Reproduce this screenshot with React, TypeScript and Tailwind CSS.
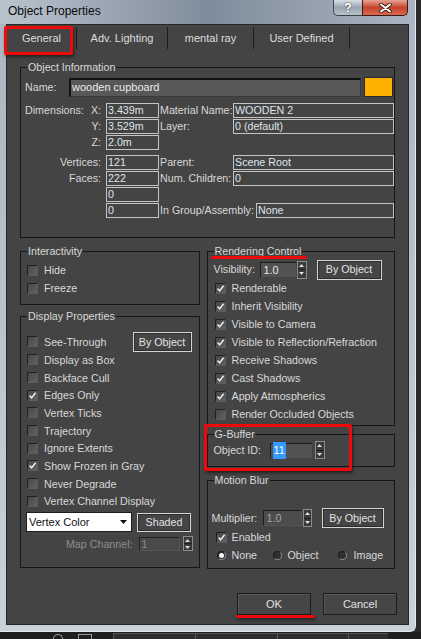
import React from 'react';

type Kids = { children?: React.ReactNode; className?: string };

function Group({ title, className = '', children }: Kids & { title: string }) {
  return (
    <fieldset className={`min-w-0 border border-[#161616] ${className}`}>
      <legend className="ml-[6px] px-[1px] leading-[14px] text-[#d8d8d8]">{title}</legend>
      {children}
    </fieldset>
  );
}

function CheckBox({ checked = false }: { checked?: boolean }) {
  return (
    <span className="relative block h-[11px] w-[11px] shrink-0 border border-t-[#202020] border-l-[#202020] border-b-[#5c5c5c] border-r-[#5c5c5c] bg-gradient-to-br from-[#474747] to-[#626262]">
      {checked && (
        <svg viewBox="0 0 9 9" className="absolute left-0 top-0 h-[9px] w-[9px]">
          <path d="M1.6 4.5 L3.6 6.9 L7.6 1.8" fill="none" stroke="#f0f0f0" strokeWidth="1.5" />
        </svg>
      )}
    </span>
  );
}

function CheckRow({ label, checked, className = '' }: { label: string; checked?: boolean; className?: string }) {
  return (
    <div className={`flex items-center whitespace-nowrap ${className}`}>
      <CheckBox checked={checked} />
      <span className="ml-[6px]">{label}</span>
    </div>
  );
}

function Radio({ on = false }: { on?: boolean }) {
  return (
    <span className="relative block h-[9px] w-[9px] shrink-0 rounded-full border border-t-[#1c1c1c] border-l-[#1c1c1c] border-b-[#8a8a8a] border-r-[#8a8a8a] bg-[#2f2f2f]">
      {on && <span className="absolute left-[1px] top-[1px] h-[5px] w-[5px] rounded-full bg-[#f4f4f4]" />}
    </span>
  );
}

function Arrows({ className = '' }: { className?: string }) {
  return (
    <span className={`flex shrink-0 flex-col border border-[#8c8c8c] bg-[#3a3a3a] ${className}`}>
      <span className="flex flex-1 items-center justify-center border-b border-[#222]">
        <svg width="5" height="3" viewBox="0 0 5 3"><path d="M0 3L2.5 0L5 3Z" fill="#dedede" /></svg>
      </span>
      <span className="flex flex-1 items-center justify-center">
        <svg width="5" height="3" viewBox="0 0 5 3"><path d="M0 0L5 0L2.5 3Z" fill="#dedede" /></svg>
      </span>
    </span>
  );
}

function Box({ className = '', children }: Kids) {
  return (
    <div className={`flex h-[15px] items-center overflow-hidden whitespace-nowrap border border-[#c4c4c4] pl-[1px] text-[#dfe5ee] ${className}`}>
      {children}
    </div>
  );
}

function Btn({ className = '', children }: Kids) {
  return (
    <div className={`flex items-center justify-center border border-[#d4d4d4] bg-[#454545] text-[#e2e2e2] shadow-[inset_0_0_0_1px_#2c2c2c] ${className}`}>
      {children}
    </div>
  );
}

interface InfoRowProps {
  lead?: string;
  label?: string;
  value: string;
  rLabel?: string;
  rValue?: string;
  wide?: boolean;
}

function InfoRow({ lead, label, value, rLabel, rValue, wide }: InfoRowProps) {
  return (
    <div className="flex h-[15px] items-center whitespace-nowrap">
      <div className="flex w-[79px] justify-between pr-[3px]">
        <span>{lead}</span>
        <span>{label}</span>
      </div>
      <Box className="ml-[2px] w-[53px]">{value}</Box>
      {rLabel !== undefined && (
        <>
          <span className={wide ? 'w-[97px] pl-[1px]' : 'w-[74px] pl-[1px]'}>{rLabel}</span>
          <Box className={wide ? 'w-[138px]' : 'w-[161px]'}>{rValue}</Box>
        </>
      )}
    </div>
  );
}

const dims: InfoRowProps[] = [
  { lead: 'Dimensions:', label: 'X:', value: '3.439m', rLabel: 'Material Name:', rValue: 'WOODEN 2' },
  { label: 'Y:', value: '3.529m', rLabel: 'Layer:', rValue: '0 (default)' },
  { label: 'Z:', value: '2.0m' },
];

const counts: InfoRowProps[] = [
  { label: 'Vertices:', value: '121', rLabel: 'Parent:', rValue: 'Scene Root' },
  { label: 'Faces:', value: '222', rLabel: 'Num. Children:', rValue: '0' },
  { value: '0' },
  { value: '0', rLabel: 'In Group/Assembly:', rValue: 'None', wide: true },
];

const displayRows = [
  { label: 'Display as Box' },
  { label: 'Backface Cull' },
  { label: 'Edges Only', checked: true },
  { label: 'Vertex Ticks' },
  { label: 'Trajectory' },
  { label: 'Ignore Extents' },
  { label: 'Show Frozen in Gray', checked: true },
  { label: 'Never Degrade' },
  { label: 'Vertex Channel Display' },
];

const renderRows = [
  'Renderable',
  'Inherit Visibility',
  'Visible to Camera',
  'Visible to Reflection/Refraction',
  'Receive Shadows',
  'Cast Shadows',
  'Apply Atmospherics',
];

export default function App() {
  return (
    <div className="relative h-[639px] w-[421px] overflow-hidden bg-[#2a2a2a] font-['Liberation_Sans',Arial,sans-serif] text-[10.7px] text-[#d8d8d8]">
      {/* window frame */}
      <div className="flex h-[632px] w-[416px] flex-col rounded-br-[6px] border-b border-r border-[#e4eaf0] bg-gradient-to-b from-[#a9b5c2] to-[#c9d2db]">
        {/* title bar */}
        <div className="flex h-[24px] shrink-0 items-start bg-gradient-to-r from-[#bac4cf] via-[#7f8c9b] to-[#aab5c1]">
          <span className="pl-[8px] pt-[4px] text-[12px] leading-[14px] text-[#0b0b0b]">Object Properties</span>
          <div className="ml-auto mr-[7px] flex">
            <div className="flex h-[16px] w-[29px] items-center justify-center rounded-bl-[5px] border border-t-0 border-r-0 border-[#3c434c] bg-gradient-to-b from-[#d8dee5] via-[#9aa5b1] to-[#b8c2cc] text-[12px] font-bold leading-none text-white [text-shadow:0_0_2px_#222]">
              ?
            </div>
            <div className="flex h-[16px] w-[46px] items-center justify-center rounded-br-[5px] border border-t-0 border-[#3a1814] bg-gradient-to-b from-[#e7a293] via-[#c4432e] to-[#d96a4e]">
              <svg width="13" height="10" viewBox="0 0 13 10">
                <path d="M2 1.5 L11 8.5 M11 1.5 L2 8.5" stroke="#3a1a14" strokeWidth="3.6" strokeLinecap="round" />
                <path d="M2 1.5 L11 8.5 M11 1.5 L2 8.5" stroke="#ffffff" strokeWidth="2" strokeLinecap="round" />
              </svg>
            </div>
          </div>
        </div>

        {/* dialog body */}
        <div className="mx-[6px] mb-[6px] flex flex-1 flex-col border border-[#262626] bg-[#444444]">
          {/* tabs */}
          <div className="flex h-[26px] shrink-0 py-[2px] text-[11px] text-[#dedede]">
            <div className="flex w-[70px] items-center justify-center border-r border-[#1c1c1c]">General</div>
            <div className="flex w-[91px] items-center justify-center border-r border-[#1c1c1c]">Adv. Lighting</div>
            <div className="flex w-[86px] items-center justify-center border-r border-[#1c1c1c]">mental ray</div>
            <div className="flex w-[96px] items-center justify-center border-r border-[#1c1c1c]">User Defined</div>
          </div>

          <div className="px-[13px]">
            {/* Object Information */}
            <Group title="Object Information" className="mt-[9px]">
              <div className="pb-[19px] pl-[4px] pt-[3px]">
                <div className="flex h-[20px] items-center">
                  <span className="w-[44px]">Name:</span>
                  <div className="flex h-[19px] w-[292px] items-center border-b border-l-2 border-r border-t-2 border-b-[#3a3a3a] border-l-[#121212] border-r-[#3a3a3a] border-t-[#121212] bg-[#585858] pl-[1px] text-[11px] text-[#ececec]">
                    wooden cupboard
                  </div>
                  <div className="ml-[3px] h-[20px] w-[29px] border border-[#2a2a2a] bg-[#ffb000]" />
                </div>
                <div className="mt-[6px] flex flex-col gap-[1px]">
                  {dims.map((r, i) => (
                    <InfoRow key={i} {...r} />
                  ))}
                </div>
                <div className="mt-[5px] flex flex-col gap-[1px]">
                  {counts.map((r, i) => (
                    <InfoRow key={i} {...r} />
                  ))}
                </div>
              </div>
            </Group>

            <div className="mt-[6px] flex items-start">
              {/* left column */}
              <div className="flex w-[180px] flex-col">
                <Group title="Interactivity">
                  <div className="pb-[7px] pl-[6px] pt-[3px]">
                    <CheckRow label="Hide" className="h-[18px]" />
                    <CheckRow label="Freeze" className="h-[18px]" />
                  </div>
                </Group>

                <Group title="Display Properties" className="mt-[4px]">
                  <div className="pb-[16px] pt-[10px]">
                    <div className="flex h-[18px] items-center pl-[6px] pr-[7px]">
                      <CheckRow label="See-Through" />
                      <Btn className="ml-auto h-[20px] w-[59px]">By Object</Btn>
                    </div>
                    {displayRows.map((r) => (
                      <CheckRow key={r.label} label={r.label} checked={r.checked} className="h-[17.7px] pl-[6px]" />
                    ))}
                    <div className="mt-[2px] flex h-[20px] items-center pl-[5px]">
                      <div className="flex h-[20px] w-[106px] items-center border border-[#1e1e1e] bg-white pl-[2px] text-[11px] text-[#111]">
                        <span>Vertex Color</span>
                        <svg className="ml-auto mr-[4px]" width="7" height="4" viewBox="0 0 7 4"><path d="M0 0H7L3.5 4Z" fill="#111" /></svg>
                      </div>
                      <Btn className="ml-[5px] h-[19px] w-[54px]">Shaded</Btn>
                    </div>
                    <div className="mt-[4px] flex h-[15px] items-center justify-end pr-[6px] text-[#8e8e8e]">
                      <span className="mr-[6px]">Map Channel:</span>
                      <div className="flex h-[14px] w-[41px] items-center border-b border-l border-r border-t border-b-[#555] border-l-[#222] border-r-[#555] border-t-[#222] bg-[#4a4a4a] pl-[2px]">1</div>
                      <Arrows className="ml-[3px] h-[15px] w-[10px]" />
                    </div>
                  </div>
                </Group>
              </div>

              {/* right column */}
              <div className="ml-[7px] flex w-[189px] flex-col">
                <Group title="Rendering Control">
                  <div className="pb-[2px] pt-[2px]">
                    <div className="flex h-[19px] items-center pl-[6px]">
                      <span className="w-[46px]">Visibility:</span>
                      <div className="flex h-[15px] w-[36px] items-center border-l border-t border-[#1c1c1c] bg-[#535353] pl-[3px] text-[#e6e6e6]">1.0</div>
                      <Arrows className="ml-[1px] h-[18px] w-[10px]" />
                      <Btn className="ml-[10px] h-[20px] w-[65px]">By Object</Btn>
                    </div>
                    {renderRows.map((l) => (
                      <CheckRow key={l} label={l} checked className="h-[18px] pl-[7px]" />
                    ))}
                    <CheckRow label="Render Occluded Objects" className="h-[18px] pl-[7px]" />
                  </div>
                </Group>

                <Group title="G-Buffer" className="mt-[1px]">
                  <div className="flex h-[18px] items-center pl-[6px]">
                    <span className="w-[56px]">Object ID:</span>
                    <div className="flex h-[15px] w-[42px] items-center border-l border-t border-[#1c1c1c] bg-[#535353] pl-[2px]">
                      <span className="bg-[#3399ff] px-[1px] text-white">11</span>
                    </div>
                    <Arrows className="ml-[3px] h-[18px] w-[10px]" />
                  </div>
                  <div className="h-[7px]" />
                </Group>

                <Group title="Motion Blur" className="mt-[6px]">
                  <div className="pb-[3px] pt-[21px]">
                    <div className="flex h-[20px] items-center pl-[4px]">
                      <span className="w-[51px]">Multiplier:</span>
                      <div className="flex h-[16px] w-[39px] items-center border-b border-l border-r border-t border-b-[#555] border-l-[#1c1c1c] border-r-[#555] border-t-[#1c1c1c] bg-[#4c4c4c] pl-[3px] text-[#a6a6a6]">1.0</div>
                      <Arrows className="ml-[1px] h-[18px] w-[9px]" />
                      <Btn className="ml-[10px] h-[20px] w-[62px]">By Object</Btn>
                    </div>
                    <div className="flex h-[18px] items-center pl-[8px]">
                      <CheckBox checked />
                      <span className="ml-[5px]">Enabled</span>
                    </div>
                    <div className="flex h-[19px] items-center pl-[9px]">
                      <div className="flex w-[56px] items-center">
                        <Radio on />
                        <span className="ml-[6px]">None</span>
                      </div>
                      <div className="flex w-[65px] items-center">
                        <Radio />
                        <span className="ml-[6px]">Object</span>
                      </div>
                      <div className="flex items-center">
                        <Radio />
                        <span className="ml-[7px]">Image</span>
                      </div>
                    </div>
                  </div>
                </Group>
              </div>
            </div>

            {/* OK / Cancel */}
            <div className="-mr-[2px] mt-[24px] flex justify-end gap-[12px]">
              <div className="flex h-[22px] w-[74px] items-center justify-center border border-[#1c1c1c] bg-[#464646] text-[11px] text-[#e0e0e0] shadow-[inset_1px_1px_0_#585858]">OK</div>
              <div className="flex h-[22px] w-[74px] items-center justify-center border border-[#1c1c1c] bg-[#464646] text-[11px] text-[#e0e0e0] shadow-[inset_1px_1px_0_#585858]">Cancel</div>
            </div>
          </div>
        </div>
      </div>

      {/* strip of the application behind the dialog */}
      <div className="flex h-[7px] items-end bg-[#1e1e1e]">
        <span className="ml-[53px] h-[5px] w-[10px] rounded-t-full border border-b-0 border-[#9a9a9a]" />
        <span className="ml-[15px] h-[5px] w-[14px] border border-b-0 border-[#9a9a9a]" />
        <span className="ml-[21px] h-[6px] w-[82px] border-l border-t border-[#555] bg-[#2d2d2d]" />
        <span className="h-[6px] w-[82px] border-l border-t border-[#555] bg-[#2d2d2d]" />
        <span className="h-[6px] w-[71px] border-l border-t border-[#555] bg-[#2d2d2d]" />
        <span className="h-[6px] w-[40px] border-l border-t border-[#555] bg-[#2d2d2d]" />
      </div>

      {/* red annotations */}
      <div className="absolute left-[4px] top-[26px] h-[29px] w-[69px] rounded-[2px] border-[3px] border-[#ee0a0a] shadow-[1px_2px_3px_rgba(0,0,0,0.5)]" />
      <div className="absolute left-[211px] top-[256px] h-[3px] w-[96px] rounded-full bg-[#ee0a0a]" />
      <div className="absolute left-[204px] top-[424px] h-[47px] w-[148px] rounded-[2px] border-[3px] border-[#ee0a0a] shadow-[1px_2px_3px_rgba(0,0,0,0.5)]" />
      <div className="absolute left-[236px] top-[615px] h-[3px] w-[79px] rounded-full bg-[#ee0a0a] shadow-[1px_2px_3px_rgba(0,0,0,0.5)]" />
    </div>
  );
}
